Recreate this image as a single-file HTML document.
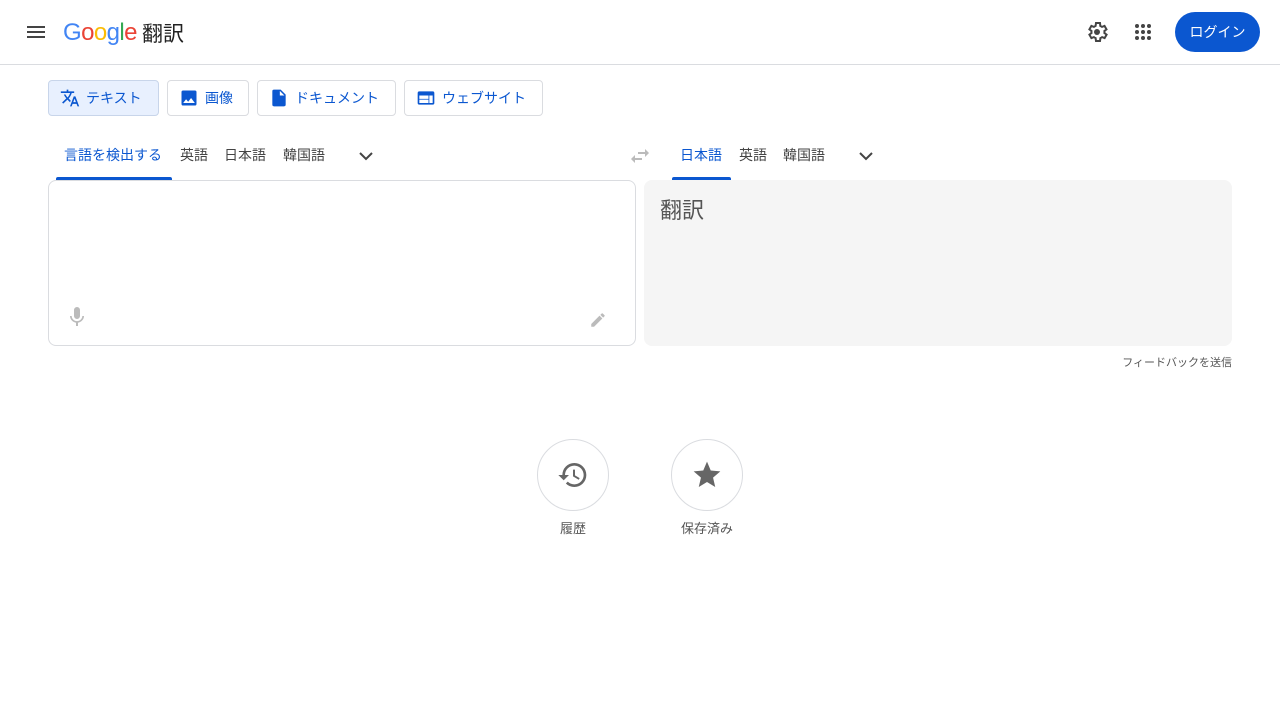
<!DOCTYPE html>
<html><head><meta charset="utf-8"><style>
*{box-sizing:border-box;margin:0;padding:0}
body{width:1280px;height:720px;background:#fff;font-family:"Liberation Sans","Noto Sans CJK JP",sans-serif;position:relative;overflow:hidden;color:#444}
.a{position:absolute}
.hdr{left:0;top:0;width:1280px;height:65px;border-bottom:1px solid #dadce0}
.btn{position:absolute;top:80px;height:36px;border:1px solid #dadce0;border-radius:4px;font-size:14px;color:#0b57d0;display:flex;align-items:center;padding-left:11px;gap:6px}
.tab{position:absolute;top:145px;font-size:14px;color:#444}
</style></head><body>
<div class="a hdr"></div>
<svg class="a" style="left:24px;top:20px" width="24" height="24" viewBox="0 0 24 24"><path d="M3 18h18v-2H3v2zm0-5h18v-2H3v2zm0-7v2h18V6H3z" fill="#444"/></svg>
<div class="a" style="left:63px;top:19px;font-size:24px;letter-spacing:-0.6px"><span style="color:#4285f4">G</span><span style="color:#ea4335">o</span><span style="color:#fbbc05">o</span><span style="color:#4285f4">g</span><span style="color:#34a853">l</span><span style="color:#ea4335">e</span></div>
<div class="a" style="left:142px;top:18px;font-size:21px;color:#222">翻訳</div>
<svg class="a" style="left:1085px;top:20px" width="24" height="24" viewBox="0 0 24 24"><path d="M19.4 13a7.5 7.5 0 0 0 0-2l2.1-1.6-2-3.5-2.5 1a7 7 0 0 0-1.7-1L15 3h-4l-.4 2.9a7 7 0 0 0-1.7 1l-2.5-1-2 3.5L6.5 11a7.5 7.5 0 0 0 0 2l-2.1 1.6 2 3.5 2.5-1a7 7 0 0 0 1.7 1L11 21h4l.4-2.9a7 7 0 0 0 1.7-1l2.5 1 2-3.5z" fill="none" stroke="#444" stroke-width="2"/><circle cx="13" cy="12" r="3" fill="#444" transform="translate(-1 0)"/></svg>
<svg class="a" style="left:1131px;top:20px" width="24" height="24" viewBox="0 0 24 24" fill="#444"><circle cx="6" cy="6" r="2"/><circle cx="12" cy="6" r="2"/><circle cx="18" cy="6" r="2"/><circle cx="6" cy="12" r="2"/><circle cx="12" cy="12" r="2"/><circle cx="18" cy="12" r="2"/><circle cx="6" cy="18" r="2"/><circle cx="12" cy="18" r="2"/><circle cx="18" cy="18" r="2"/></svg>
<div class="a" style="left:1175px;top:12px;width:85px;height:40px;border-radius:20px;background:#0b57d0;color:#fff;font-size:14px;display:flex;align-items:center;justify-content:center">ログイン</div>

<div class="btn" style="left:48px;width:111px;background:#e8f0fe;border-color:#c8d5ea"><svg width="20" height="20" viewBox="0 0 24 24"><path d="M12.9 15.1l-2.5-2.5v0c1.7-1.9 3-4.2 3.7-6.6H17V4h-7V2H8v2H1v2h11.2c-.7 1.9-1.7 3.8-3.2 5.4-1-1.1-1.8-2.3-2.4-3.6h-2c.7 1.6 1.7 3.2 3 4.6l-5.1 5 1.4 1.4L8.9 14l3.1 3.1.9-2zM18.5 10h-2L12 22h2l1.1-3h4.8l1.1 3h2l-4.5-12zm-2.6 7l1.6-4.3 1.6 4.3h-3.2z" fill="#0b57d0"/></svg>テキスト</div>
<div class="btn" style="left:167px;width:82px"><svg width="20" height="20" viewBox="0 0 24 24"><path d="M21 19V5a2 2 0 0 0-2-2H5a2 2 0 0 0-2 2v14a2 2 0 0 0 2 2h14a2 2 0 0 0 2-2zM8.5 13.5l2.5 3 3.5-4.5 4.5 6H5l3.5-4.5z" fill="#0b57d0"/></svg>画像</div>
<div class="btn" style="left:257px;width:139px"><svg width="20" height="20" viewBox="0 0 24 24"><path d="M14 2H6a2 2 0 0 0-2 2v16a2 2 0 0 0 2 2h12a2 2 0 0 0 2-2V8l-6-6zm-1 7V3.5L18.5 9H13z" fill="#0b57d0"/></svg>ドキュメント</div>
<div class="btn" style="left:404px;width:139px"><svg width="20" height="20" viewBox="0 0 24 24"><path d="M20 4H4a2 2 0 0 0-2 2v12a2 2 0 0 0 2 2h16a2 2 0 0 0 2-2V6a2 2 0 0 0-2-2zm-5 14H4v-4h11v4zm0-5H4V9h11v4zm5 5h-4V9h4v9z" fill="#0b57d0"/></svg>ウェブサイト</div>

<div class="tab" style="left:64px;color:#0b57d0">言語を検出する</div>
<div class="a" style="left:56px;top:177px;width:116px;height:3px;background:#0b57d0;border-radius:2px 2px 0 0"></div>
<div class="tab" style="left:180px">英語</div>
<div class="tab" style="left:224px">日本語</div>
<div class="tab" style="left:283px">韓国語</div>
<svg class="a" style="left:354px;top:144px" width="24" height="24" viewBox="0 0 24 24"><path d="M6 9l6 6 6-6" fill="none" stroke="#444" stroke-width="2"/></svg>
<svg class="a" style="left:628px;top:144px" width="24" height="24" viewBox="0 0 24 24"><path d="M6.99 11L3 15l3.99 4v-3H14v-2H6.99v-3zM21 9l-3.99-4v3H10v2h7.01v3L21 9z" fill="#bbb"/></svg>
<div class="tab" style="left:680px;color:#0b57d0">日本語</div>
<div class="a" style="left:672px;top:177px;width:59px;height:3px;background:#0b57d0;border-radius:2px 2px 0 0"></div>
<div class="tab" style="left:739px">英語</div>
<div class="tab" style="left:783px">韓国語</div>
<svg class="a" style="left:854px;top:144px" width="24" height="24" viewBox="0 0 24 24"><path d="M6 9l6 6 6-6" fill="none" stroke="#444" stroke-width="2"/></svg>

<div class="a" style="left:48px;top:180px;width:588px;height:166px;border:1px solid #dadce0;border-radius:8px"></div>
<svg class="a" style="left:65px;top:305px" width="24" height="24" viewBox="0 0 24 24"><path d="M12 14a3 3 0 0 0 3-3V5a3 3 0 0 0-6 0v6a3 3 0 0 0 3 3zm5.3-3c0 3-2.5 5.1-5.3 5.1S6.7 14 6.7 11H5c0 3.4 2.7 6.2 6 6.7V21h2v-3.3c3.3-.5 6-3.3 6-6.7h-1.7z" fill="#bbb"/></svg>
<svg class="a" style="left:589px;top:311px" width="18" height="18" viewBox="0 0 24 24"><path d="M3 17.25V21h3.75L17.8 9.94l-3.75-3.75L3 17.25zM20.7 7.04a1 1 0 0 0 0-1.41l-2.34-2.34a1 1 0 0 0-1.41 0l-1.83 1.83 3.75 3.75 1.83-1.83z" fill="#bbb"/></svg>
<div class="a" style="left:644px;top:180px;width:588px;height:166px;background:#f5f5f5;border-radius:8px"></div>
<div class="a" style="left:660px;top:193px;font-size:22px;color:#555">翻訳</div>
<div class="a" style="left:1100px;top:354px;width:132px;text-align:right;font-size:11px;color:#555">フィードバックを送信</div>

<div class="a" style="left:537px;top:439px;width:72px;height:72px;border:1px solid #dadce0;border-radius:50%"></div>
<svg class="a" style="left:557px;top:459px" width="32" height="32" viewBox="0 0 24 24"><path d="M13 3a9 9 0 0 0-9 9H1l3.89 3.89.07.14L9 12H6c0-3.87 3.13-7 7-7s7 3.13 7 7-3.13 7-7 7c-1.93 0-3.68-.79-4.94-2.06l-1.42 1.42A8.95 8.95 0 0 0 13 21a9 9 0 0 0 0-18zm-1 5v5l4.28 2.54.72-1.21-3.5-2.08V8H12z" fill="#666"/></svg>
<div class="a" style="left:537px;top:518px;width:72px;text-align:center;font-size:13px;color:#555">履歴</div>
<div class="a" style="left:671px;top:439px;width:72px;height:72px;border:1px solid #dadce0;border-radius:50%"></div>
<svg class="a" style="left:691px;top:459px" width="32" height="32" viewBox="0 0 24 24"><path d="M12 17.27L18.18 21l-1.64-7.03L22 9.24l-7.19-.61L12 2 9.19 8.63 2 9.24l5.46 4.73L5.82 21z" fill="#666"/></svg>
<div class="a" style="left:667px;top:518px;width:80px;text-align:center;font-size:13px;color:#555">保存済み</div>
</body></html>
